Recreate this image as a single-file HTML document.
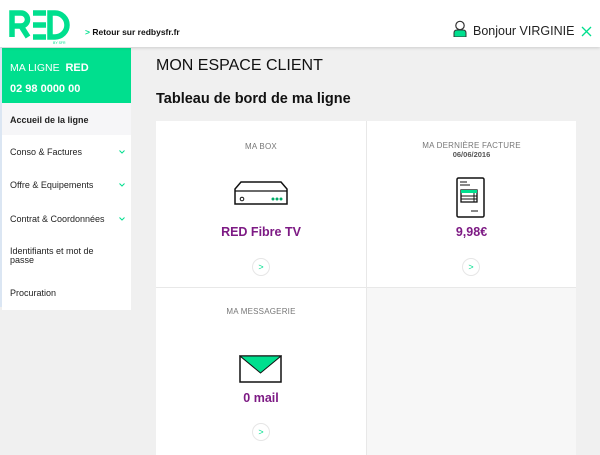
<!DOCTYPE html>
<html><head><meta charset="utf-8"><style>
*{margin:0;padding:0;box-sizing:border-box}
body{width:600px;height:455px;overflow:hidden;background:#f0f0f0;font-family:"Liberation Sans",sans-serif;position:relative}
.hdr{position:absolute;left:0;top:0;width:600px;height:47px;background:#fff;box-shadow:0 1px 3px rgba(0,0,0,.15);z-index:2}
.abs{position:absolute}
.side{position:absolute;left:2px;top:48px;width:129px}
.green{background:#00df8e;height:55px;color:#fff;padding:14px 0 0 8px;font-size:10.5px}
.green b{font-size:11px}
.menu{background:#fff;height:207px}
.mi{position:absolute;left:8px;font-size:9px;color:#222;}
.chev{position:absolute;left:117px}
.card{position:absolute;background:#fff;text-align:center}
.lbl{font-size:8px;color:#777;letter-spacing:.2px}
.val{font-size:12.5px;font-weight:bold;color:#7d1a84}
.btn{position:absolute;width:18px;height:18px;border-radius:50%;border:1px solid #e6e6e6;color:#00df8e;font-size:9px;line-height:16px;text-align:center;background:#fff}
</style></head><body>
<div class="hdr">
 <svg class="abs" style="left:8px;top:9px" width="62" height="36" viewBox="0 0 62 36">
  <g fill="none" stroke="#00df8e" stroke-width="5.5">
   <path d="M4 28V4h9a6.5 6.5 0 0 1 0 13h-9M13 17l7 11"/>
   <path d="M25 4h13M25 16h13M25 28h13"/>
   <path d="M42 4h5a12 12 0 0 1 0 24h-5z"/>
  </g>
  <text x="45" y="35" font-size="3.5" fill="#00df8e" font-family="Liberation Sans">BY SFR</text>
 </svg>
 <div class="abs" style="left:85px;top:27px;font-size:8.5px;font-weight:bold;color:#111"><span style="color:#00df8e">&gt;</span> Retour sur redbysfr.fr</div>
 <svg class="abs" style="left:453px;top:20px" width="14" height="17" viewBox="0 0 14 17"><circle cx="7" cy="5.5" r="4.2" fill="none" stroke="#333" stroke-width="1.2"/><path d="M1 17v-4q0-3 3-3h6q3 0 3 3v4z" fill="#00df8e" stroke="#333" stroke-width="1"/></svg>
 <div class="abs" style="left:473px;top:24px;font-size:12.5px;color:#222">Bonjour VIRGINIE</div>
 <svg class="abs" style="left:581px;top:26px" width="11" height="11" viewBox="0 0 11 11"><path d="M1 1l9 9M10 1l-9 9" stroke="#00df8e" stroke-width="1.3"/></svg>
</div>
<div class="abs" style="left:0;top:47px;width:2px;height:260px;background:#dbe6f3"></div>
<div class="side">
 <div class="green">MA LIGNE &nbsp;<b>RED</b><div style="margin-top:9px;font-weight:bold;font-size:11px">02 98 0000 00</div></div>
 <div class="abs" style="left:0;top:55px;width:129px;height:32px;background:#f6f6f8"></div>
 <div class="menu"></div>
 <div class="mi" style="top:67px;font-weight:bold">Accueil de la ligne</div>
 <div class="mi" style="top:99px">Conso &amp; Factures</div>
 <div class="mi" style="top:132px">Offre &amp; Equipements</div>
 <div class="mi" style="top:166px">Contrat &amp; Coordonnées</div>
 <svg class="chev" style="top:102px" width="6" height="4" viewBox="0 0 6 4"><path d="M.5.5l2.5 2.5 2.5-2.5" fill="none" stroke="#00df8e"/></svg>
 <svg class="chev" style="top:135px" width="6" height="4" viewBox="0 0 6 4"><path d="M.5.5l2.5 2.5 2.5-2.5" fill="none" stroke="#00df8e"/></svg>
 <svg class="chev" style="top:169px" width="6" height="4" viewBox="0 0 6 4"><path d="M.5.5l2.5 2.5 2.5-2.5" fill="none" stroke="#00df8e"/></svg>
 <div class="mi" style="top:199px;line-height:9px;width:110px">Identifiants et mot de passe</div>
 <div class="mi" style="top:240px">Procuration</div>
</div>
<div class="abs" style="left:156px;top:57px;font-size:16px;color:#111">MON ESPACE CLIENT</div>
<div class="abs" style="left:156px;top:91px;font-size:14.5px;font-weight:bold;color:#111">Tableau de bord de ma ligne</div>
<div class="abs" style="left:156px;top:121px;width:420px;height:334px;background:#e8e8e8"></div>
<div class="abs" style="left:367px;top:288px;width:209px;height:167px;background:#f7f7f7"></div>
<div class="card" style="left:156px;top:121px;width:210px;height:166px">
 <div class="lbl" style="margin-top:21px">MA BOX</div>
 <svg class="abs" style="left:77px;top:60px" width="56" height="26" viewBox="0 0 56 26"><path d="M8 1h40l6 7v15H2V8z" fill="#fff" stroke="#111" stroke-width="1.5"/><path d="M2 10h52" stroke="#111" stroke-width="1.2"/><circle cx="9" cy="18" r="1.8" fill="none" stroke="#111"/><circle cx="40" cy="18" r="1.5" fill="#0a6"/><circle cx="44" cy="18" r="1.5" fill="#0a6"/><circle cx="48" cy="18" r="1.5" fill="#0a6"/></svg>
 <div class="val abs" style="left:0;width:210px;top:104px">RED Fibre TV</div>
 <div class="btn" style="left:96px;top:137px">&gt;</div>
</div>
<div class="card" style="left:367px;top:121px;width:209px;height:166px">
 <div class="lbl" style="margin-top:20px">MA DERNIÈRE FACTURE</div>
 <div style="font-size:7.5px;font-weight:bold;color:#555">06/06/2016</div>
 <svg class="abs" style="left:89px;top:56px" width="30" height="42" viewBox="0 0 30 42"><rect x="1" y="1" width="27" height="39" rx="1.5" fill="#fff" stroke="#111" stroke-width="1.5"/><path d="M4 5h7M4 8h10M15 34h7" stroke="#111" stroke-width="1"/><rect x="5" y="13" width="16" height="12" fill="#fff" stroke="#111" stroke-width="1.3"/><rect x="5" y="13" width="16" height="3" fill="#00df8e"/><path d="M5 19h16M5 22h16M18 16v9" stroke="#111"/></svg>
 <div class="val abs" style="left:0;width:209px;top:104px">9,98€</div>
 <div class="btn" style="left:95px;top:137px">&gt;</div>
</div>
<div class="card" style="left:156px;top:288px;width:210px;height:167px">
 <div class="lbl" style="margin-top:19px">MA MESSAGERIE</div>
 <svg class="abs" style="left:83px;top:67px" width="43" height="28" viewBox="0 0 43 28"><rect x="1" y="1" width="41" height="26" fill="#fff" stroke="#111" stroke-width="1.5"/><path d="M1 1h41L21.5 18z" fill="#00df8e" stroke="#111" stroke-width="1"/></svg>
 <div class="val abs" style="left:0;width:210px;top:103px">0 mail</div>
 <div class="btn" style="left:96px;top:135px">&gt;</div>
</div>
</body></html>
